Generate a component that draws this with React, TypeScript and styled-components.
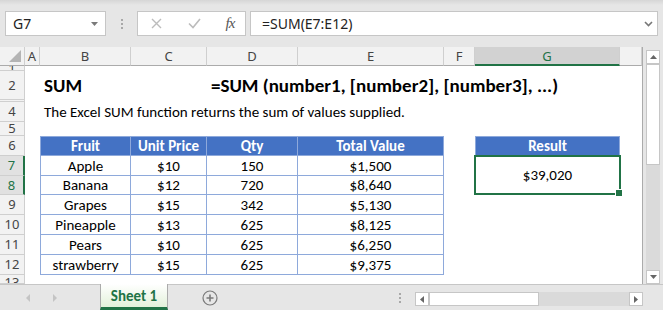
import React from 'react';
import styled, { createGlobalStyle } from 'styled-components';

const GREEN = '#217346';
const BLUE = '#4472c4';
const TBORDER = '#8ea9db';
const HLINE = '#cfcfcf';
const CELL_FONT = 'Carlito, Lato, "Liberation Sans", sans-serif';
const UI_FONT = '"Noto Sans", "Open Sans", "Liberation Sans", sans-serif';

const GlobalStyle = createGlobalStyle`
  html, body { margin: 0; padding: 0; background: #e6e6e6; }
  body { font-family: ${CELL_FONT}; }
  * { box-sizing: border-box; }
`;

const Window = styled.div`
  width: 663px;
  height: 310px;
  display: flex;
  flex-direction: column;
  background: #e6e6e6;
  overflow: hidden;
`;

/* ---------- formula bar ---------- */
const FormulaBar = styled.div`
  height: 47px;
  flex: none;
  display: flex;
  align-items: flex-start;
  padding: 11px 5px 0 5px;
  background: linear-gradient(#d6d6d6 0px, #e6e6e6 5px);
`;

const Box = styled.div`
  height: 25px;
  background: #fff;
  border: 1px solid #c6c6c6;
  display: flex;
  align-items: center;
`;

const NameBox = styled(Box)`
  width: 101px;
  padding: 0 7px 0 7px;
  justify-content: space-between;
  font-family: ${UI_FONT};
  font-size: 14px;
  color: #222;
`;

const Grip = styled.div`
  width: 31px;
  height: 25px;
  display: flex;
  flex-direction: column;
  align-items: center;
  justify-content: center;
  gap: 2px;
`;

const Dot = styled.span`
  width: 2px;
  height: 2px;
  background: #a8a8a8;
`;

const FxBox = styled(Box)`
  width: 109px;
  padding-left: 13px;
`;

const IconSlot = styled.span<{ $w: number }>`
  width: ${(p) => p.$w}px;
  display: flex;
  align-items: center;
  justify-content: center;
`;

const Fx = styled.span`
  font-family: "Liberation Serif", "DejaVu Serif", serif;
  font-style: italic;
  font-size: 15px;
  color: #555;
  letter-spacing: -1px;
`;

const FormulaInput = styled(Box)`
  flex: 1;
  margin-left: 4px;
  padding: 0 4px 0 11px;
  justify-content: space-between;
  font-family: ${UI_FONT};
  font-size: 14px;
  color: #222;
`;

/* ---------- sheet ---------- */
const SheetArea = styled.div`
  height: 237px;
  flex: none;
  display: flex;
`;

const Grid = styled.div`
  width: 643px;
  height: 237px;
  background: #fff;
  border-right: 1px solid #ababab;
  display: grid;
  grid-template-columns: 25px 15px 91px 76px 91px 146px 31px 145px 1fr;
  grid-template-rows: 19px 5px 29px 2px 20px 14px 20px 20px 19px 20px 20px 20px 20px 1fr;
  overflow: hidden;
`;

const Corner = styled.div`
  grid-column: 1;
  grid-row: 1;
  background: #f2f2f2;
  border-right: 1px solid ${HLINE};
  border-bottom: 1px solid #ababab;
  position: relative;
  &::after {
    content: '';
    position: absolute;
    right: 3px;
    bottom: 3px;
    border-style: solid;
    border-width: 0 0 12px 12px;
    border-color: transparent transparent #b4b4b4 transparent;
  }
`;

const ColHead = styled.div<{ $col: number; $sel?: boolean }>`
  grid-column: ${(p) => p.$col};
  grid-row: 1;
  display: flex;
  align-items: center;
  justify-content: center;
  font-family: ${UI_FONT};
  font-size: 13px;
  color: ${(p) => (p.$sel ? GREEN : '#444')};
  background: ${(p) => (p.$sel ? '#d2d2d2' : '#f2f2f2')};
  border-right: 1px solid ${HLINE};
  border-bottom: ${(p) => (p.$sel ? `2px solid ${GREEN}` : '1px solid #ababab')};
  padding-top: ${(p) => (p.$sel ? '1px' : '0')};
`;

const RowHead = styled.div<{ $row: number; $sel?: boolean; $top?: boolean }>`
  grid-column: 1;
  grid-row: ${(p) => p.$row};
  display: flex;
  align-items: ${(p) => (p.$top ? 'flex-start' : 'center')};
  justify-content: center;
  overflow: hidden;
  font-family: ${UI_FONT};
  font-size: 13px;
  line-height: 13px;
  padding-top: ${(p) => (p.$top ? '1px' : '0')};
  color: ${(p) => (p.$sel ? GREEN : '#444')};
  background: ${(p) => (p.$sel ? '#e1e1e1' : '#f2f2f2')};
  border-bottom: 1px solid ${HLINE};
  border-right: ${(p) => (p.$sel ? `2px solid ${GREEN}` : `1px solid ${HLINE}`)};
`;

const TextCell = styled.div<{ $col: string; $row: number; $size: number; $bold?: boolean }>`
  grid-column: ${(p) => p.$col};
  grid-row: ${(p) => p.$row};
  display: flex;
  align-items: center;
  padding-left: 4px;
  white-space: nowrap;
  font-size: ${(p) => p.$size}px;
  font-weight: ${(p) => (p.$bold ? 700 : 400)};
  color: #000;
`;

const TCell = styled.div<{ $col: number; $row: number; $head?: boolean; $first?: boolean }>`
  grid-column: ${(p) => p.$col};
  grid-row: ${(p) => p.$row};
  display: flex;
  align-items: center;
  justify-content: center;
  white-space: nowrap;
  font-size: 15px;
  font-weight: ${(p) => (p.$head ? 700 : 400)};
  color: ${(p) => (p.$head ? '#fff' : '#000')};
  background: ${(p) => (p.$head ? BLUE : '#fff')};
  border-right: 1px solid ${TBORDER};
  border-bottom: 1px solid ${TBORDER};
  border-top: ${(p) => (p.$head ? `1px solid ${TBORDER}` : 'none')};
  border-left: ${(p) => (p.$first ? `1px solid ${TBORDER}` : 'none')};
`;

const ResultCell = styled.div`
  grid-column: 8;
  grid-row: 8 / span 2;
  margin: -1px -1px 0 -1px;
  border: 2px solid ${GREEN};
  display: flex;
  align-items: center;
  justify-content: center;
  font-size: 15px;
  color: #000;
  position: relative;
  &::after {
    content: '';
    position: absolute;
    right: -4px;
    bottom: -4px;
    width: 6px;
    height: 6px;
    background: ${GREEN};
    border: 1px solid #fff;
  }
`;

/* ---------- vertical scrollbar ---------- */
const VScroll = styled.div`
  width: 20px;
  display: flex;
  flex-direction: column;
  padding: 3px 3px 0 3px;
`;

const ScrollBtn = styled.div`
  width: 14px;
  height: 14px;
  flex: none;
  background: #fff;
  border: 1px solid #c6c6c6;
  display: flex;
  align-items: center;
  justify-content: center;
`;

const VTrack = styled.div`
  flex: 1;
  background: #dadada;
  display: flex;
  flex-direction: column;
`;

const VThumb = styled.div`
  height: 101px;
  background: #fff;
  border: 1px solid #c6c6c6;
`;

/* ---------- tab bar ---------- */
const TabBar = styled.div`
  height: 26px;
  flex: none;
  display: flex;
  align-items: stretch;
  border-top: 1px solid #c6c6c6;
  background: #e6e6e6;
`;

const Nav = styled.div`
  width: 100px;
  display: flex;
  align-items: center;
  padding-left: 26px;
  gap: 23px;
`;

const SheetTab = styled.div`
  width: 68px;
  margin-top: -1px;
  background: linear-gradient(#ffffff, #e3f1da);
  border-left: 1px solid #ababab;
  border-right: 1px solid #ababab;
  border-bottom: 3px solid ${GREEN};
  display: flex;
  align-items: center;
  justify-content: center;
  font-family: ${CELL_FONT};
  font-weight: 700;
  font-size: 15px;
  color: ${GREEN};
  padding-top: 1px;
`;

const AddSheet = styled.div`
  margin-left: 34px;
  display: flex;
  align-items: center;
`;

const HDots = styled.div`
  margin-left: 181px;
  display: flex;
  flex-direction: column;
  justify-content: center;
  gap: 2px;
`;

const HScroll = styled.div`
  margin-left: 14px;
  margin-top: 7px;
  width: 228px;
  height: 14px;
  display: flex;
`;

const HTrack = styled.div`
  flex: 1;
  background: #dadada;
  display: flex;
`;

const HThumb = styled.div`
  width: 110px;
  background: #fff;
  border: 1px solid #c6c6c6;
`;

/* ---------- icons ---------- */
const Tri = ({ dir, color = '#666', w = 7, h = 4 }: { dir: 'up' | 'down' | 'left' | 'right'; color?: string; w?: number; h?: number }) => {
  const horiz = dir === 'left' || dir === 'right';
  const W = horiz ? h : w;
  const H = horiz ? w : h;
  let pts = '';
  if (dir === 'down') pts = `0,0 ${W},0 ${W / 2},${H}`;
  if (dir === 'up') pts = `0,${H} ${W},${H} ${W / 2},0`;
  if (dir === 'right') pts = `0,0 ${W},${H / 2} 0,${H}`;
  if (dir === 'left') pts = `${W},0 0,${H / 2} ${W},${H}`;
  return (
    <svg width={W} height={H} viewBox={`0 0 ${W} ${H}`}>
      <polygon points={pts} fill={color} />
    </svg>
  );
};

const XIcon = () => (
  <svg width="11" height="11" viewBox="0 0 11 11">
    <path d="M1 1 L10 10 M10 1 L1 10" stroke="#bcbcbc" strokeWidth="1.4" fill="none" />
  </svg>
);

const CheckIcon = () => (
  <svg width="13" height="11" viewBox="0 0 13 11">
    <path d="M1 5.5 L5 9.5 L12 1" stroke="#bcbcbc" strokeWidth="1.6" fill="none" />
  </svg>
);

const Chevron = () => (
  <svg width="9" height="6" viewBox="0 0 9 6">
    <path d="M1 1 L4.5 4.5 L8 1" stroke="#777" strokeWidth="1.6" fill="none" />
  </svg>
);

const PlusCircle = () => (
  <svg width="16" height="16" viewBox="0 0 16 16">
    <circle cx="8" cy="8" r="7" stroke="#7a7a7a" strokeWidth="1.2" fill="none" />
    <path d="M8 4.5 V11.5 M4.5 8 H11.5" stroke="#7a7a7a" strokeWidth="1.6" />
  </svg>
);

/* ---------- data ---------- */
const cols = ['A', 'B', 'C', 'D', 'E', 'F', 'G', ''];
const rowNums = [1, 2, 3, 4, 5, 6, 7, 8, 9, 10, 11, 12, 13];
const headers = ['Fruit', 'Unit Price', 'Qty', 'Total Value'];
const data = [
  ['Apple', '$10', '150', '$1,500'],
  ['Banana', '$12', '720', '$8,640'],
  ['Grapes', '$15', '342', '$5,130'],
  ['Pineapple', '$13', '625', '$8,125'],
  ['Pears', '$10', '625', '$6,250'],
  ['strawberry', '$15', '625', '$9,375'],
];

export default function App() {
  return (
    <>
      <GlobalStyle />
      <Window>
        <FormulaBar>
          <NameBox>
            <span>G7</span>
            <Tri dir="down" color="#7a7a7a" />
          </NameBox>
          <Grip>
            <Dot />
            <Dot />
            <Dot />
          </Grip>
          <FxBox>
            <IconSlot $w={11}><XIcon /></IconSlot>
            <IconSlot $w={26} />
            <IconSlot $w={13}><CheckIcon /></IconSlot>
            <IconSlot $w={22} />
            <IconSlot $w={14}><Fx>fx</Fx></IconSlot>
          </FxBox>
          <FormulaInput>
            <span>=SUM(E7:E12)</span>
            <Chevron />
          </FormulaInput>
        </FormulaBar>

        <SheetArea>
          <Grid>
            <Corner />
            {cols.map((c, i) => (
              <ColHead key={i} $col={i + 2} $sel={c === 'G'}>
                {c}
              </ColHead>
            ))}
            {rowNums.map((n) => (
              <RowHead key={n} $row={n + 1} $sel={n === 7 || n === 8} $top={n === 13}>
                {n === 3 ? '' : n}
              </RowHead>
            ))}

            <TextCell $col="3" $row={3} $size={19} $bold>
              SUM
            </TextCell>
            <TextCell $col="5 / span 4" $row={3} $size={19} $bold>
              =SUM (number1, [number2], [number3], ...)
            </TextCell>
            <TextCell $col="3 / span 5" $row={5} $size={15}>
              The Excel SUM function returns the sum of values supplied.
            </TextCell>

            {headers.map((h, i) => (
              <TCell key={h} $col={i + 3} $row={7} $head $first={i === 0}>
                {h}
              </TCell>
            ))}
            {data.map((row, r) =>
              row.map((v, i) => (
                <TCell key={`${r}-${i}`} $col={i + 3} $row={r + 8} $first={i === 0}>
                  {v}
                </TCell>
              ))
            )}

            <TCell $col={8} $row={7} $head $first>
              Result
            </TCell>
            <ResultCell>$39,020</ResultCell>
          </Grid>

          <VScroll>
            <ScrollBtn>
              <Tri dir="up" color="#666" />
            </ScrollBtn>
            <VTrack>
              <VThumb />
            </VTrack>
            <ScrollBtn>
              <Tri dir="down" color="#666" />
            </ScrollBtn>
          </VScroll>
        </SheetArea>

        <TabBar>
          <Nav>
            <Tri dir="left" color="#c4c4c4" w={8} h={4} />
            <Tri dir="right" color="#c4c4c4" w={8} h={4} />
          </Nav>
          <SheetTab>Sheet 1</SheetTab>
          <AddSheet>
            <PlusCircle />
          </AddSheet>
          <HDots>
            <Dot />
            <Dot />
            <Dot />
          </HDots>
          <HScroll>
            <ScrollBtn>
              <Tri dir="left" color="#666" w={7} h={4} />
            </ScrollBtn>
            <HTrack>
              <HThumb />
            </HTrack>
            <ScrollBtn>
              <Tri dir="right" color="#666" w={7} h={4} />
            </ScrollBtn>
          </HScroll>
        </TabBar>
      </Window>
    </>
  );
}
